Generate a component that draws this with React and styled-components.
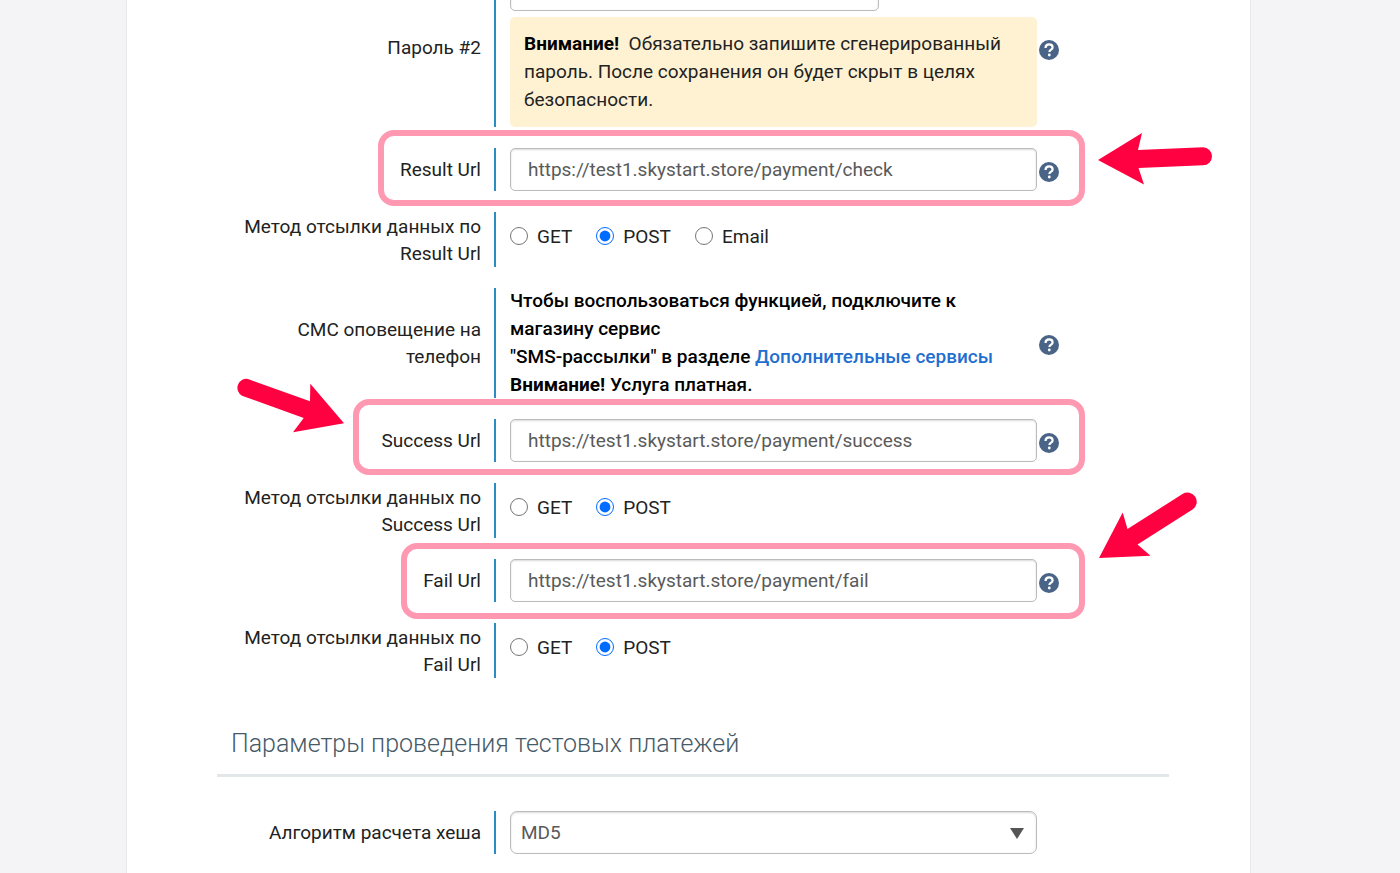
import React from 'react'
import styled, { createGlobalStyle } from 'styled-components'

const GlobalStyle = createGlobalStyle`
  * {
    box-sizing: border-box;
  }
  body {
    margin: 0;
    background: #f4f4f7;
    color: #222;
    font-family: Roboto, "Open Sans", sans-serif;
    font-size: 19px;
    font-weight: 400;
    line-height: 27px;
  }
`;

const Page = styled.div`
  display: flex;
  height: 100vh;
  overflow: hidden;
  padding: 0 149px 0 126px;
`;

const Card = styled.main`
  flex: 1;
  padding: 0 81px 0 90px;
  background: white;
  border-left: 1px solid #e6e8ea;
  border-right: 1px solid #e6e8ea;
`;

/* the form is scrolled a little, its first row starts above the window */
const Form = styled.form`
  display: flex;
  flex-direction: column;
  gap: 21px;
  margin-top: -32px;
`;

const Row = styled.div`
  position: relative;
  display: flex;
  min-height: ${({ $tall }) => ($tall ? '55px' : '43px')};
`;

const LabelCell = styled.div`
  display: flex;
  flex: 0 0 279px;
  align-items: center;
  justify-content: flex-end;
  padding-right: 13px;
  border-right: 2px solid #2b8cc4;
  text-align: right;
`;

const LabelText = styled.label`
  max-width: 240px;
`;

const ValueCell = styled.div`
  display: flex;
  flex: 1;
  align-items: center;
  gap: 2px;
  padding-left: 14px;
`;

const Field = styled.div`
  flex: 0 0 80%;
`;

const Input = styled.input`
  display: block;
  width: 100%;
  height: 43px;
  padding: 0 17px;
  border: 1px solid #bbb;
  border-radius: 5px;
  background: white;
  box-shadow: inset 0 1px 2px rgba(0, 0, 0, 0.15);
  color: #5a5a5a;
  font: inherit;
`;

const Select = styled.select`
  display: block;
  width: 100%;
  height: 43px;
  padding: 0 10px;
  appearance: none;
  border: 1px solid #bbb;
  border-radius: 7px;
  background: white;
  box-shadow: inset 0 1px 2px rgba(0, 0, 0, 0.15);
  color: #5a5a5a;
  font: inherit;
`;

const SelectWrap = styled.div`
  position: relative;

  &::after {
    content: '';
    position: absolute;
    top: 17px;
    right: 13px;
    border: 7px solid transparent;
    border-top: 11px solid #555;
    border-bottom: 0;
    pointer-events: none;
  }
`;

const PasswordLine = styled.div`
  display: flex;
  align-items: center;
  gap: 24px;
  margin-bottom: 6px;
`;

const PasswordBox = styled.div`
  flex: 0 0 70%;
`;

const Link = styled.a`
  color: #1f6fd0;
  text-decoration: none;
`;

const Warning = styled.p`
  margin: 0;
  padding: 13px 14px;
  border-radius: 5px;
  background: #fff2d3;
  line-height: 28px;

  b {
    color: black;
    font-weight: 700;
  }
`;

const Notice = styled.p`
  margin: -1px 0;
  color: black;
  font-weight: 500;
  line-height: 28px;

  b {
    font-weight: 700;
  }
`;

const HelpButton = styled.button`
  display: flex;
  margin-top: 4px;
  padding: 0;
  border: 0;
  background: none;
  cursor: pointer;
`;

const Radios = styled.div`
  display: flex;
  gap: 24px;
  padding-bottom: 7px;
`;

const RadioLabel = styled.label`
  display: flex;
  align-items: center;
  gap: 9px;
`;

const Radio = styled.input`
  width: 18px;
  height: 18px;
  margin: 0;
  accent-color: #006bff;
`;

const SectionTitle = styled.h2`
  margin: 27px 0 13px;
  padding: 0 14px 12px;
  border-bottom: 3px solid #e2e7ea;
  color: #465a68;
  font-size: 25px;
  font-weight: 300;
  line-height: 36px;
`;

const Highlight = styled.div`
  position: absolute;
  top: ${({ $top }) => $top}px;
  right: 84px;
  left: ${({ $left }) => $left}px;
  height: 76px;
  border: 6px solid #ff99b1;
  border-radius: 16px;
  pointer-events: none;
`;

const Arrow = styled.svg`
  position: absolute;
  top: ${({ $top }) => $top}px;
  ${({ $side }) => $side}: ${({ $offset }) => $offset}px;
  fill: #ff0040;
  pointer-events: none;
`;

const Help = () => (
  <HelpButton type="button" aria-label="Справка">
    <svg width="20" height="20" viewBox="0 0 20 20">
      <circle cx="10" cy="10" r="10" fill="#4a6488" />
      <path d="M6.500 8C6.600 5.600 8 4.400 10 4.400c2.100 0 3.600 1.200 3.600 3 0 2.300-3.200 2.300-3.200 4.700" fill="none" stroke="white" strokeWidth="2.200" />
      <circle cx="10.300" cy="15" r="1.400" fill="white" />
    </svg>
  </HelpButton>
)

const UrlRow = ({ id, label, value, children }) => (
  <Row>
    <LabelCell>
      <LabelText htmlFor={id}>{label}</LabelText>
    </LabelCell>
    <ValueCell>
      <Field>
        <Input id={id} type="text" defaultValue={value} />
      </Field>
      <Help />
    </ValueCell>
    {children}
  </Row>
)

const MethodRow = ({ name, label, options }) => (
  <Row $tall role="radiogroup" aria-labelledby={`${name}-label`}>
    <LabelCell>
      <LabelText as="span" id={`${name}-label`}>{label}</LabelText>
    </LabelCell>
    <ValueCell>
      <Radios>
        {options.map((option) => (
          <RadioLabel key={option}>
            <Radio type="radio" name={name} value={option} defaultChecked={option === 'POST'} />
            {option}
          </RadioLabel>
        ))}
      </Radios>
    </ValueCell>
  </Row>
)

const App = () => (
  <Page>
    <GlobalStyle />
    <Card>
      <Form>
        <Row>
          <LabelCell>
            <LabelText htmlFor="password2">Пароль #2</LabelText>
          </LabelCell>
          <ValueCell>
            <Field>
              <PasswordLine>
                <PasswordBox>
                  <Input id="password2" type="text" />
                </PasswordBox>
                <Link href="#generate">Сгенерировать</Link>
              </PasswordLine>
              <Warning>
                <b>Внимание!</b>&nbsp; Обязательно запишите сгенерированный пароль. После сохранения он будет скрыт в целях безопасности.
              </Warning>
            </Field>
            <Help />
          </ValueCell>
        </Row>
        <UrlRow id="result-url" label="Result Url" value="https://test1.skystart.store/payment/check">
          <Highlight $top={-18} $left={161} />
          <Arrow $top={-18} $side="right" $offset={-45} width="118" height="56" viewBox="1096 130 118 56">
            <path d="M1098 160L1142 133L1138 150L1203 147.300A9 9 0 0 1 1203 165.300L1138.500 168L1144 184.500Z" />
          </Arrow>
        </UrlRow>
        <MethodRow name="result-method" label="Метод отсылки данных по Result Url" options={['GET', 'POST', 'Email']} />
        <Row>
          <LabelCell>
            <LabelText as="span">СМС оповещение на телефон</LabelText>
          </LabelCell>
          <ValueCell>
            <Field>
              <Notice>
                Чтобы воспользоваться функцией, подключите к магазину сервис
                <br />
                "SMS-рассылки" в разделе <Link href="#services">Дополнительные сервисы</Link>
                <br />
                <b>Внимание!</b> Услуга платная.
              </Notice>
            </Field>
            <Help />
          </ValueCell>
        </Row>
        <UrlRow id="success-url" label="Success Url" value="https://test1.skystart.store/payment/success">
          <Highlight $top={-20} $left={136} />
          <Arrow $top={-43} $side="left" $offset={17} width="112" height="60" viewBox="234 376 112 60">
            <path d="M344 423.300L310.300 383.700L310 401.300L248 379A9 9 0 0 0 242 395.700L303.700 418L293 432.300Z" />
          </Arrow>
        </UrlRow>
        <MethodRow name="success-method" label="Метод отсылки данных по Success Url" options={['GET', 'POST']} />
        <UrlRow id="fail-url" label="Fail Url" value="https://test1.skystart.store/payment/fail">
          <Highlight $top={-16} $left={184} />
          <Arrow $top={-69} $side="right" $offset={-31} width="104" height="70" viewBox="1096 490 104 70">
            <path d="M1099 558L1122.700 512.500L1127.500 529L1182.500 494A9 9 0 0 1 1192.500 509.500L1137.500 544.500L1150.500 555.700Z" />
          </Arrow>
        </UrlRow>
        <MethodRow name="fail-method" label="Метод отсылки данных по Fail Url" options={['GET', 'POST']} />
        <SectionTitle>Параметры проведения тестовых платежей</SectionTitle>
        <Row>
          <LabelCell>
            <LabelText htmlFor="hash">Алгоритм расчета хеша</LabelText>
          </LabelCell>
          <ValueCell>
            <Field>
              <SelectWrap>
                <Select id="hash" defaultValue="MD5">
                  <option>MD5</option>
                  <option>SHA256</option>
                </Select>
              </SelectWrap>
            </Field>
          </ValueCell>
        </Row>
      </Form>
    </Card>
  </Page>
)

export default App
